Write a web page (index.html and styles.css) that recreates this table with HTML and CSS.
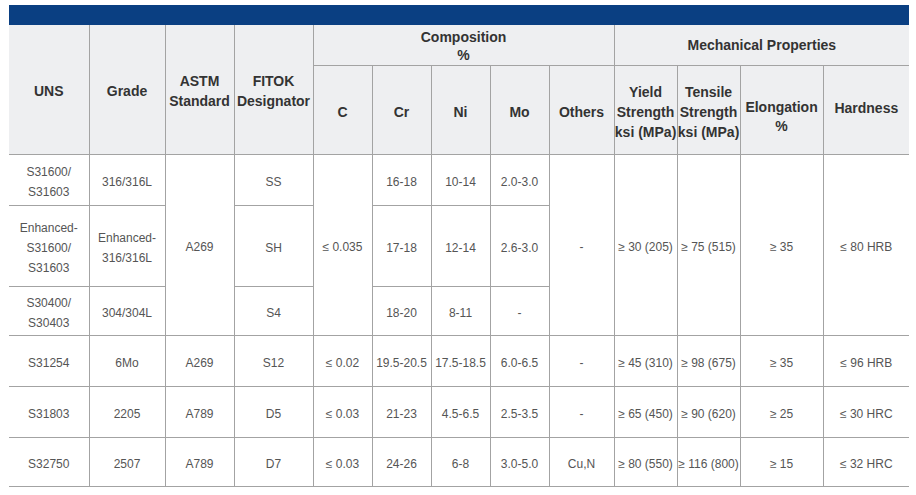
FILE: index.html
```html
<!DOCTYPE html>
<html lang="en">
<head>
<meta charset="utf-8">
<title>Material Specifications</title>
<link rel="stylesheet" href="styles.css">
</head>
<body>
<div class="wrap">
  <div class="bar"></div>
  <table class="spec">
    <colgroup>
      <col class="w80"><col class="w76"><col class="w69"><col class="w79">
      <col class="w59"><col class="w59"><col class="w59"><col class="w59">
      <col class="w65"><col class="w63"><col class="w63"><col class="w83"><col class="w86">
    </colgroup>
    <thead>
      <tr class="h1">
        <th rowspan="2" class="tall">UNS</th>
        <th rowspan="2" class="tall">Grade</th>
        <th rowspan="2" class="tall">ASTM<br>Standard</th>
        <th rowspan="2" class="tall">FITOK<br>Designator</th>
        <th colspan="5" class="comp">Composition<br>%</th>
        <th colspan="4">Mechanical Properties</th>
      </tr>
      <tr class="h2">
        <th>C</th>
        <th>Cr</th>
        <th>Ni</th>
        <th>Mo</th>
        <th>Others</th>
        <th>Yield<br>Strength<br>ksi (MPa)</th>
        <th>Tensile<br>Strength<br>ksi (MPa)</th>
        <th class="elong">Elongation<br>%</th>
        <th class="hard">Hardness</th>
      </tr>
    </thead>
    <tbody>
      <tr class="r1">
        <td>S31600/<br>S31603</td>
        <td>316/316L</td>
        <td rowspan="3">A269</td>
        <td>SS</td>
        <td rowspan="3">≤ 0.035</td>
        <td>16-18</td>
        <td>10-14</td>
        <td>2.0-3.0</td>
        <td rowspan="3">-</td>
        <td rowspan="3">≥ 30 (205)</td>
        <td rowspan="3">≥ 75 (515)</td>
        <td rowspan="3">≥ 35</td>
        <td rowspan="3">≤ 80 HRB</td>
      </tr>
      <tr class="r2">
        <td>Enhanced-<br>S31600/<br>S31603</td>
        <td>Enhanced-<br>316/316L</td>
        <td>SH</td>
        <td>17-18</td>
        <td>12-14</td>
        <td>2.6-3.0</td>
      </tr>
      <tr class="r3">
        <td>S30400/<br>S30403</td>
        <td>304/304L</td>
        <td>S4</td>
        <td>18-20</td>
        <td>8-11</td>
        <td>-</td>
      </tr>
      <tr class="r4">
        <td>S31254</td>
        <td>6Mo</td>
        <td>A269</td>
        <td>S12</td>
        <td>≤ 0.02</td>
        <td>19.5-20.5</td>
        <td>17.5-18.5</td>
        <td>6.0-6.5</td>
        <td>-</td>
        <td>≥ 45 (310)</td>
        <td>≥ 98 (675)</td>
        <td>≥ 35</td>
        <td>≤ 96 HRB</td>
      </tr>
      <tr class="r5">
        <td>S31803</td>
        <td>2205</td>
        <td>A789</td>
        <td>D5</td>
        <td>≤ 0.03</td>
        <td>21-23</td>
        <td>4.5-6.5</td>
        <td>2.5-3.5</td>
        <td>-</td>
        <td>≥ 65 (450)</td>
        <td>≥ 90 (620)</td>
        <td>≥ 25</td>
        <td>≤ 30 HRC</td>
      </tr>
      <tr class="r6">
        <td>S32750</td>
        <td>2507</td>
        <td>A789</td>
        <td>D7</td>
        <td>≤ 0.03</td>
        <td>24-26</td>
        <td>6-8</td>
        <td>3.0-5.0</td>
        <td>Cu,N</td>
        <td>≥ 80 (550)</td>
        <td>≥ 116 (800)</td>
        <td>≥ 15</td>
        <td>≤ 32 HRC</td>
      </tr>
    </tbody>
  </table>
</div>
</body>
</html>
```

FILE: styles.css
```css
html, body {
  margin: 0;
  padding: 0;
  background: #ffffff;
}

.wrap {
  padding: 5px 0 0 9px;
  width: 900px;
  font-family: "Liberation Sans", Arial, sans-serif;
}

.bar {
  height: 20px;
  background: #0a3f82;
}

.spec {
  width: 900px;
  table-layout: fixed;
  border-collapse: collapse;
  border-style: hidden;
  border-bottom: 1px solid #a3a3a3;
}

.w80 { width: 80px; }
.w76 { width: 76px; }
.w69 { width: 69px; }
.w79 { width: 79px; }
.w59 { width: 59px; }
.w65 { width: 65px; }
.w63 { width: 63px; }
.w83 { width: 83px; }
.w86 { width: 86px; }

.spec th,
.spec td {
  border: 1px solid #a3a3a3;
  padding: 0;
  text-align: center;
  vertical-align: middle;
  line-height: 20px;
}

.spec th {
  background: #eeeff1;
  color: #333333;
  font-size: 14px;
  font-weight: bold;
}

.spec th.tall,
.spec .h2 th {
  padding-top: 4px;
}

.spec th.comp {
  line-height: 18px;
  padding-top: 2px;
}

.spec .h2 th.elong {
  padding-top: 15px;
  line-height: 19px;
}

.spec .h2 th.hard {
  padding-top: 0;
  padding-bottom: 4px;
}

.spec td {
  color: #555555;
  font-size: 12px;
  padding-top: 4px;
}

.h1 { height: 40px; }
.h2 { height: 89px; }
.r1 { height: 51px; }
.r2 { height: 81px; }
.r3 { height: 49px; }
.r4 { height: 51px; }
.r5 { height: 51px; }
.r6 { height: 49px; }
```
